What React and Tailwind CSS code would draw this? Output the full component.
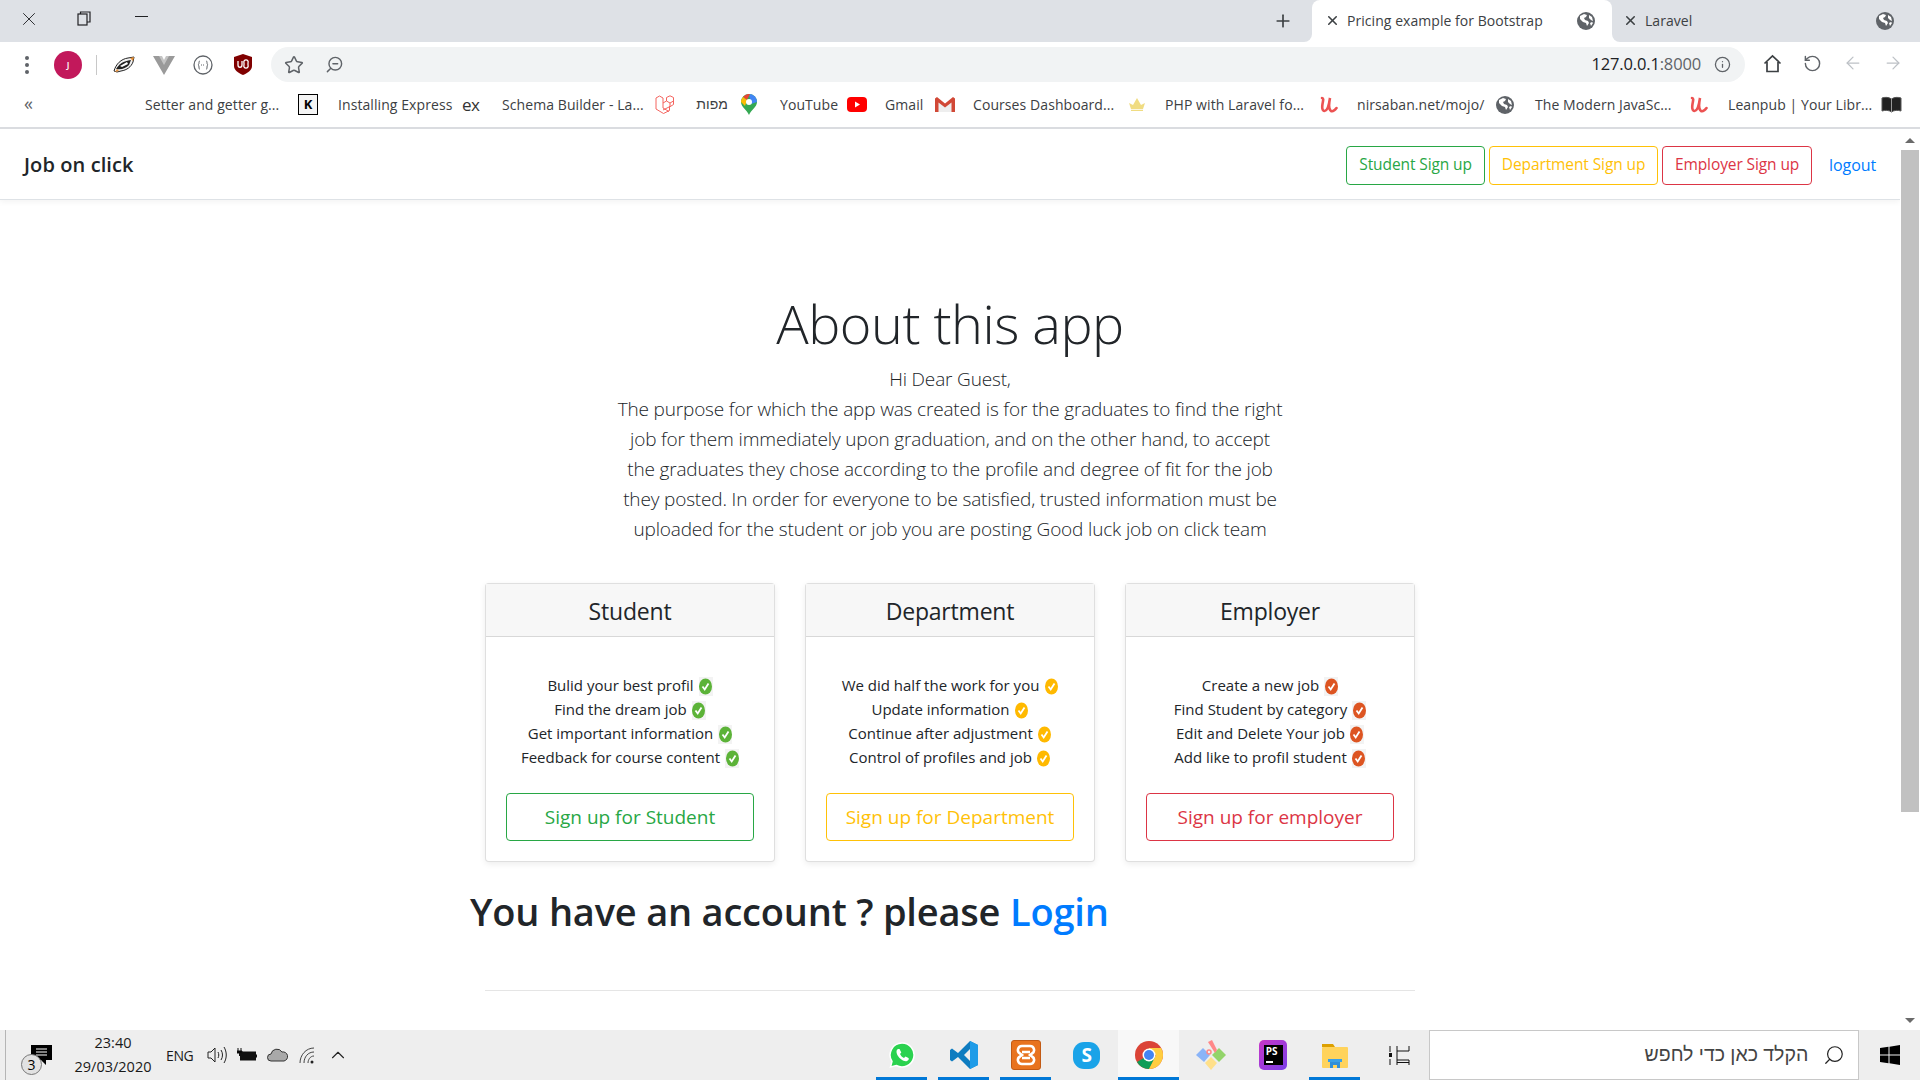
import React from "react";
import { ArrowLeft, ArrowRight, Star, RotateCcw, ZoomOut, X, Plus, Info, Search, ChevronUp } from "lucide-react";

const Globe = ({ s = 18 }) => (
  <svg width={s} height={s} viewBox="0 0 18 18">
    <circle cx="9" cy="9" r="9" fill="#5f6368" />
    <path d="M3 4l4-2 3 1-1 2-2 1 1 2 3 1 1 2-2 3-1-3-3-1-3-3zM12 3l3 2 1 4-2-1-2-2zM13 11l2-1 1 1-2 3z" fill="#fff" />
  </svg>
);
const UdemyU = () => (
  <svg width="19" height="17" viewBox="0 0 19 17">
    <path d="M3 2c2 0 1 3 .5 6S3 15 5.500 15c3 0 4.500-6 5.500-13-1 5-2 11 1 13 2 1 4-1 5.500-3" fill="none" stroke="#ec5252" strokeWidth="2.600" strokeLinecap="round" />
  </svg>
);
const Bookmark = ({ w, text, icon, gap = "gap-3", rtl, extra = "" }) => (
  <div className={`flex items-center ${gap} ${extra}`}>
    <span className={`block whitespace-nowrap ${rtl ? "font-['Liberation_Sans',sans-serif] text-right" : ""}`} style={{ width: w }}>{text}</span>
    {icon}
  </div>
);
const Check = ({ color, bg }) => (
  <span className={`inline-flex items-center justify-center w-[14px] h-[19px] ml-[5px] align-[-4px] ${bg}`}>
    <svg width="13" height="17" viewBox="0 0 13 17">
      <ellipse cx="6.500" cy="8.500" rx="6.500" ry="8" fill={color} />
      <path d="M3.500 8.500l2.200 3 3.800-6" fill="none" stroke="#fff" strokeWidth="1.800" />
    </svg>
  </span>
);
const Card = ({ title, items, btn, text, border, color, bg }) => (
  <div className="w-[290px] h-[279px] border border-[rgba(0,0,0,0.125)] rounded-[4px] shadow-[0_2px_6px_rgba(0,0,0,0.075)] bg-white flex flex-col">
    <div className="h-[53px] pt-[2px] bg-[#f7f7f7] border-b border-[rgba(0,0,0,0.125)] flex items-center justify-center text-[23px] text-[#212529] tracking-[-0.2px]">{title}</div>
    <div className="px-[20px] pt-[36px]">
      <ul className="text-center text-[15px] leading-[24px] text-[#212529] tracking-[0px]">
        {items.map((t) => (
          <li key={t}>{t}<Check color={color} bg={bg} /></li>
        ))}
      </ul>
      <div className={`mt-[24px] h-[48px] border rounded-[4px] flex items-center justify-center text-[19px] ${text} ${border}`}>{btn}</div>
    </div>
  </div>
);
const Pill = ({ c, children }) => (
  <div className={`h-[39px] border rounded-[4px] flex items-center justify-center text-[15.500px] tracking-[-0.1px] ${c}`}>{children}</div>
);
const TaskIcon = ({ on, active, children }) => (
  <div className={`relative h-full flex items-center justify-center ${active ? "bg-[#f8f8f8] w-[61px]" : "w-[51px]"}`}>
    {children}
    {on && <div className="absolute bottom-0 left-0 right-0 h-[3px] bg-[#0078d7]" />}
  </div>
);

export default function App() {
  return (
    <div className="w-[1920px] h-[1080px] overflow-hidden flex flex-col bg-white text-[#3c4043] font-['Open_Sans','Noto_Sans',sans-serif]">
      {/* tab strip */}
      <div className="h-[42px] shrink-0 flex bg-[linear-gradient(#dee1e6_50%,#fff_50%)]">
        <div className="w-[1312px] bg-[#dee1e6] rounded-br-[8px] flex items-center relative">
          <X size={22} strokeWidth={1} className="ml-[18px] mb-[5px] text-[#202124]" />
          <svg width="14" height="15" viewBox="0 0 14 15" className="ml-[37px] mb-[5px]" fill="none" stroke="#202124" strokeWidth="1.200"><rect x="1" y="3" width="9" height="11" /><path d="M3.500 3V1H13v10h-3" /></svg>
          <div className="ml-[44px] mb-[9px] w-[13px] h-[1px] bg-[#202124]" />
          <Plus size={20} strokeWidth={2} className="absolute left-[1273px] top-[11px] text-[#3c4043]" />
        </div>
        <div className="w-[300px] bg-white rounded-t-[8px] flex items-center pl-[13px] pr-[17px] pb-[1px] text-[14px] tracking-[0.05px]">
          <X size={15} strokeWidth={2.500} className="text-[#3c4043]" />
          <span className="ml-[7px] flex-1">Pricing example for Bootstrap</span>
          <Globe />
        </div>
        <div className="flex-1 bg-[#dee1e6] rounded-bl-[8px] flex items-center pl-[11px] pr-[26px] pb-[1px] text-[14px] tracking-[0.05px]">
          <X size={15} strokeWidth={2.500} className="text-[#3c4043]" />
          <span className="ml-[7px] flex-1">Laravel</span>
          <Globe />
        </div>
      </div>
      {/* toolbar */}
      <div className="h-[40px] shrink-0 pt-[5px] flex items-stretch bg-white relative">
        <div className="w-[271px] shrink-0 flex items-center">
          <div className="ml-[25px] flex flex-col gap-[3px]">
            <span className="w-[4px] h-[4px] rounded-full bg-[#5f6368]" />
            <span className="w-[4px] h-[4px] rounded-full bg-[#5f6368]" />
            <span className="w-[4px] h-[4px] rounded-full bg-[#5f6368]" />
          </div>
          <div className="ml-[25px] w-[28px] h-[28px] rounded-full bg-[#c2185b] text-white text-[9px] font-semibold flex items-center justify-center">J</div>
          <div className="ml-[14px] w-[1px] h-[20px] bg-[#c8c8c8]" />
          <svg width="22" height="18" viewBox="0 0 22 18" className="ml-[16px]">
            <path d="M1 15C3 8 8 3 15 2l6-1-1 5c-2 5-6 8-12 9l-4 1z" fill="#f2f2f2" stroke="#222" />
            <path d="M3 13c3-5 7-8 15-9l-2 5c-3 3-7 5-13 4z" fill="#222" />
            <path d="M7 10l7-4 1 2-6 3z" fill="#fff" />
            <path d="M17 2l4-1-1 4zM2 16l2-3 2 2z" fill="#e8923a" />
          </svg>
          <svg width="22" height="20" viewBox="0 0 22 20" className="ml-[18px]">
            <path d="M0 1h7l4 7 4-7h7L11 20z" fill="#9a9a9a" />
            <path d="M6 1h3l2 4 2-4h3l-5 9z" fill="#c4c4c4" />
          </svg>
          <svg width="20" height="20" viewBox="0 0 20 20" className="ml-[18px]">
            <circle cx="10" cy="10" r="9" fill="none" stroke="#5f6368" strokeWidth="1.300" />
            <path d="M7 6c-1 0-1 1-1 2s-1 2-1 2 1 0 1 2 0 2 1 2M13 6c1 0 1 1 1 2s1 2 1 2-1 0-1 2 0 2-1 2" fill="none" stroke="#5f6368" />
            <path d="M8 10h4" stroke="#5f6368" strokeDasharray="1 1" />
          </svg>
          <svg width="18" height="21" viewBox="0 0 18 21" className="ml-[21px]">
            <path d="M9 0l9 3v9c0 4-4 7-9 9-5-2-9-5-9-9V3z" fill="#800000" />
            <path d="M4 7v4c0 3 4 3 4 0V7M10 11a2.200 2.200 0 1 0 4 0V9a2.200 2.200 0 1 0-4 0z" fill="none" stroke="#fff" strokeWidth="1.300" />
          </svg>
        </div>
        <div className="w-[1474px] h-[35px] shrink-0 rounded-full bg-[#f1f3f4] flex items-center pl-[13px] pr-[14px]">
          <Star size={20} strokeWidth={1.800} className="text-[#5f6368]" />
          <ZoomOut size={19} strokeWidth={1.800} className="ml-[21px] text-[#5f6368] -scale-x-100" />
          <span className="ml-auto text-[16.500px] text-[#202124] tracking-[-0.15px]">127.0.0.1<span className="text-[#5f6368]">:8000</span></span>
          <Info size={17} strokeWidth={1.800} className="ml-[13px] text-[#5f6368]" />
        </div>
        <div className="flex-1 flex items-center pl-[18px] mb-[3px]">
          <svg width="19" height="19" viewBox="0 0 19 19" fill="none" stroke="#3c4043" strokeWidth="1.700"><path d="M1.500 9.500L9.500 2l8 7.500M4 8v9.500h11V8" /></svg>
          <RotateCcw size={19} strokeWidth={1.800} className="ml-[21px] text-[#5f6368]" />
          <ArrowLeft size={20} strokeWidth={1.500} className="ml-[21px] text-[#bdc1c6]" />
          <ArrowRight size={20} strokeWidth={1.500} className="ml-[20px] text-[#bdc1c6]" />
        </div>
      </div>
      {/* bookmarks */}
      <div className="h-[47px] shrink-0 flex items-center border-b-2 border-[#dadce0] text-[14px] text-[#3c4043] tracking-[0.08px]">
        <span className="ml-[24px] w-[121px] text-[#5f6368] text-[18px] -mt-[3px]">«</span>
        <div className="flex items-center gap-[18px]">
          <Bookmark w={136} extra="mr-[2px]" text="Setter and getter g..." icon={<div className="w-[20px] h-[21px] border border-black bg-[#f4f4f4] flex items-center justify-center font-bold text-[13px] text-black">K</div>} gap="gap-[17px]" />
          <Bookmark w={114} extra="mr-[3px]" text="Installing Express" icon={<span className="text-[17px] text-[#333] w-[19px] tracking-[-0.5px]">ex</span>} gap="gap-[10px]" />
          <Bookmark w={143} text="Schema Builder - La..." gap="gap-[10px]" icon={
            <svg width="21" height="20" viewBox="0 0 21 20" fill="none" stroke="#f4645f" strokeWidth="1"><path d="M1 3l3.500-2L8 3v10l6 3.500M1 3v11l7.500 4.500 6-3V11M8 8l3.500-2M11.500 6V2.500L15 .8l3.500 1.700V6L15 8l-3.500-2zM15 8v3.500l-7 3.500M18.500 6v3.500L14.500 12" /></svg>
          } />
          <Bookmark w={34} extra="mr-[5px]" text="מפות" rtl gap="gap-[13px]" icon={
            <svg width="16" height="21" viewBox="0 0 16 21"><path d="M8 0a8 8 0 0 1 8 8c0 5-6 8-8 13-2-5-8-8-8-13a8 8 0 0 1 8-8z" fill="#34a853" /><path d="M8 0a8 8 0 0 1 8 8l-6 2z" fill="#4285f4" /><path d="M2 3a8 8 0 0 1 7-3l-3 6z" fill="#ea4335" /><path d="M0 8c0-2 1-4 2-5l4 3-2 6z" fill="#fbbc04" /><circle cx="8" cy="8" r="3" fill="#fff" /></svg>
          } />
          <Bookmark w={58} text="YouTube" gap="gap-[9px]" icon={
            <svg width="20" height="15" viewBox="0 0 20 15"><rect width="20" height="15" rx="4" fill="#f00" /><path d="M8 4.500v6l5-3z" fill="#fff" /></svg>
          } />
          <Bookmark w={40} text="Gmail" gap="gap-[10px]" icon={
            <svg width="20" height="15" viewBox="0 0 20 15"><path d="M1 1l9 7 9-7v14H1z" fill="#eee" /><path d="M0 1.500L2 0l8 6.500L18 0l2 1.500V15h-3.500V5.500L10 10.500 3.500 5.500V15H0z" fill="#d14836" /></svg>
          } />
          <Bookmark w={140} text="Courses Dashboard..." gap="gap-[14px]" icon={
            <svg width="20" height="13" viewBox="0 0 20 13" fill="#f0dc82"><path d="M2 5l4 2 4-7 4 7 4-2-2 6H4zM4 11.800h12V13H4z" /></svg>
          } />
          <Bookmark w={139} extra="mr-[1px]" text="PHP with Laravel fo..." gap="gap-[15px]" icon={<UdemyU />} />
          <Bookmark w={127} extra="mr-[3px]" text="nirsaban.net/mojo/" gap="gap-[12px]" icon={<Globe />} />
          <Bookmark w={139} extra="mr-[2px]" text="The Modern JavaSc..." gap="gap-[15px]" icon={<UdemyU />} />
          <Bookmark w={139} text="Leanpub | Your Libr..." gap="gap-[14px]" icon={
            <svg width="21" height="17" viewBox="0 0 21 17"><path d="M1 2c3-1 7-1 9.500 1C13 1 17 1 20 2v13c-3-1-7-1-9.500 1C8 14 4 14 1 15z" fill="#222" stroke="#555" /><path d="M10.500 3v13" stroke="#999" /></svg>
          } />
        </div>
      </div>
      {/* page */}
      <div className="flex-1 min-h-0 flex overflow-hidden">
        <div className="flex-1 min-w-0 overflow-hidden text-[#212529]">
          <nav className="h-[71px] pt-[2px] border-b border-[#dee2e6] shadow-[0_2px_6px_rgba(0,0,0,0.05)] flex items-center pl-[24px] pr-[24px]">
            <span className="text-[20px] font-semibold tracking-[0.1px] text-[#212529]">Job on click</span>
            <div className="ml-auto flex items-center gap-[4px]">
              <Pill c="w-[139px] ml-[1px] text-[#28a745] border-[#28a745]">Student Sign up</Pill>
              <Pill c="w-[169px] text-[#ffc107] border-[#ffc107]">Department Sign up</Pill>
              <Pill c="w-[150px] text-[#dc3545] border-[#dc3545]">Employer Sign up</Pill>
              <a className="ml-[13px] text-[16px] tracking-[-0.1px] text-[#007bff]">logout</a>
            </div>
          </nav>
          <div className="w-[960px] mx-auto pt-[90px]">
            <h1 className="text-[54px] leading-[67px] font-light text-center text-[#212529] tracking-[-0.5px]">About this app</h1>
            <p className="w-[700px] mx-auto mt-[7px] text-center text-[19px] leading-[30px] font-light text-[#212529] tracking-[-0.16px]">
              Hi Dear Guest,<br />
              The purpose for which the app was created is for the graduates to find the right<br />
              job for them immediately upon graduation, and on the other hand, to accept<br />
              the graduates they chose according to the profile and degree of fit for the job<br />
              they posted. In order for everyone to be satisfied, trusted information must be<br />
              uploaded for the student or job you are posting Good luck job on click team
            </p>
            <div className="mt-[39px] flex justify-center gap-[30px]">
              <Card title="Student" btn="Sign up for Student" color="#5cb338" bg="bg-[#f3f3f3]" text="text-[#28a745]" border="border-[#28a745]"
                items={["Bulid your best profil", "Find the dream job", "Get important information", "Feedback for course content"]} />
              <Card title="Department" btn="Sign up for Department" color="#ffb900" bg="bg-white" text="text-[#ffc107]" border="border-[#ffc107]"
                items={["We did half the work for you", "Update information", "Continue after adjustment", "Control of profiles and job"]} />
              <Card title="Employer" btn="Sign up for employer" color="#dd5522" bg="bg-[#f3f3f3]" text="text-[#dc3545]" border="border-[#dc3545]"
                items={["Create a new job", "Find Student by category", "Edit and Delete Your job", "Add like to profil student"]} />
            </div>
            <h2 className="mt-[25px] text-[38px] leading-[48px] font-semibold text-[#212529] tracking-[-0.2px] whitespace-nowrap">You have an account ? please <a className="text-[#007bff]">Login</a></h2>
            <hr className="mt-[55px] mx-[15px] border-[rgba(0,0,0,0.1)]" />
          </div>
        </div>
        <div className="w-[20px] shrink-0 bg-white flex flex-col items-center">
          <div className="mt-[9px] w-0 h-0 border-x-[5px] border-x-transparent border-b-[5px] border-b-[#6a6a6a]" />
          <div className="mt-[7px] w-[18px] h-[662px] bg-[#c1c1c1]" />
          <div className="mt-auto mb-[7px] w-0 h-0 border-x-[5px] border-x-transparent border-t-[5px] border-t-[#6a6a6a]" />
        </div>
      </div>
      {/* taskbar */}
      <div className="h-[50px] shrink-0 bg-[#eeeeee] flex items-stretch text-[#1a1a1a] text-[14px]">
        <div className="ml-[5px] w-[1px] bg-[#b5b5b5]" />
        <div className="relative w-[70px]">
          <svg width="21" height="20" viewBox="0 0 21 20" className="absolute left-[25px] top-[15px]"><path d="M0 0h21v15h-6v5l-5-5H0z" fill="#000" /><path d="M5 4h11M5 7h11M5 10h11" stroke="#fff" /></svg>
          <div className="absolute left-[15px] top-[24px] w-[21px] h-[21px] rounded-full bg-[#e2e2e2] border border-[#777] flex items-center justify-center text-[14px] text-black">3</div>
        </div>
        <div className="w-[74px] flex flex-col items-center justify-center text-[14.500px] leading-[24px]">
          <span>23:40</span>
          <span>29/03/2020</span>
        </div>
        <span className="ml-[16px] flex items-center text-[14px] tracking-[-0.4px]">ENG</span>
        <svg width="20" height="18" viewBox="0 0 20 18" className="ml-[14px] self-center" fill="none" stroke="#222"><path d="M1 6h3l4-4v14l-4-4H1zM11 6c1 2 1 4 0 6M14 4c2 3 2 7 0 10M17 1c3 5 3 11 0 16" /></svg>
        <svg width="20" height="14" viewBox="0 0 20 14" className="ml-[10px] self-center"><rect x="3.500" y="4" width="15" height="8" fill="#111" stroke="#111" /><rect x="18.500" y="6.500" width="1.500" height="3" fill="#111" /><path d="M1 0v3M4 0v3M0 3h5v2H0zM2.500 5v3" stroke="#111" /></svg>
        <svg width="21" height="14" viewBox="0 0 21 14" className="ml-[10px] self-center"><path d="M4 13a3.500 3.500 0 0 1 0-7 6 6 0 0 1 11-2 4.500 4.500 0 0 1 2 9z" fill="#a9a9a9" stroke="#333" /></svg>
        <svg width="17" height="17" viewBox="0 0 17 17" className="ml-[11px] self-center" fill="none" stroke="#444"><path d="M1 16C1 8 7 1 15 1M5 16c0-6 4-11 10-11M9 16c0-3 2-7 6-7" /><circle cx="13" cy="15" r="1.500" fill="#222" stroke="none" /></svg>
        <ChevronUp size={22} strokeWidth={1.200} className="ml-[11px] self-center text-[#222]" />
        <div className="ml-[527px] flex items-stretch">
          <TaskIcon on>
            <svg width="26" height="26" viewBox="0 0 26 26"><path d="M13 1a12 12 0 0 0-10 18.500L1.500 25l5.700-1.500A12 12 0 1 0 13 1z" fill="#2bd24f" stroke="#fff" strokeWidth="1.500" /><path d="M9 7c-2 1-2 4 0 7s6 6 9 5c2-1 2-2 1.500-3l-3-1.500-1.500 1.500c-2-1-3-2-4-4l1.300-1.500L10.500 7z" fill="#fff" /></svg>
          </TaskIcon>
          <div className="w-[11px]" />
          <TaskIcon on>
            <svg width="30" height="30" viewBox="0 0 30 30"><path d="M21 1l8 4v20l-8 4L9 17l-6 4.500-2-1.500v-10l2-1.500 6 4.500z" fill="#0e7cc0" /><path d="M21 1l8 4v20l-8 4z" fill="#1f9ce8" /><path d="M21 9l-6 6 6 6z" fill="#eeeeee" /></svg>
          </TaskIcon>
          <div className="w-[11px]" />
          <TaskIcon on>
            <div className="w-[30px] h-[30px] rounded-[3px] bg-[#e8731e] border border-[#c25a14] flex items-center justify-center">
              <svg width="24" height="22" viewBox="0 0 24 22" fill="none" stroke="#fff" strokeWidth="2.600"><path d="M8 2a4 4 0 0 0-2 7.500L8 11l-2 1.500A4 4 0 0 0 8 20h8a4 4 0 0 0 2-7.500L16 11l2-1.500A4 4 0 0 0 16 2zM8 8h8M8 14h8" /></svg>
            </div>
          </TaskIcon>
          <div className="w-[10px]" />
          <TaskIcon>
            <div className="w-[27px] h-[27px] rounded-[11px] bg-[#1aa3e8] flex items-center justify-center text-white font-bold text-[19px]">S</div>
          </TaskIcon>
          <div className="w-[6px]" />
          <TaskIcon on active>
            <svg width="28" height="28" viewBox="0 0 28 28"><circle cx="14" cy="14" r="14" fill="#db4437" /><path d="M14 14L2 21a14 14 0 0 0 12 7l7-12z" fill="#0f9d58" /><path d="M14 14l7 0-7 14a14 14 0 0 0 14-14c0-2-.5-5-2-7H14z" fill="#ffcd40" /><circle cx="14" cy="14" r="6.500" fill="#fff" /><circle cx="14" cy="14" r="5" fill="#4285f4" /></svg>
          </TaskIcon>
          <div className="w-[6px]" />
          <TaskIcon>
            <svg width="32" height="32" viewBox="0 0 32 32"><path d="M8 9l7 7-6 7-8-7z" fill="#8ab4f8" /><path d="M24 9l7 7-7 7-7-7z" fill="#93d46a" /><path d="M16 18l6 6-6 7-6-7z" fill="#ffe08a" /><path d="M13 3l4-2 5 10-2 3z" fill="#f88" /><circle cx="14" cy="13" r="2" fill="none" stroke="#f88" strokeWidth="1.500" /></svg>
          </TaskIcon>
          <div className="w-[11px]" />
          <TaskIcon>
            <div className="relative w-[28px] h-[30px]">
              <div className="absolute inset-0 rounded-[5px] bg-[linear-gradient(135deg,#c837c8,#7b3fe8)]" />
              <div className="absolute left-[5px] top-[5px] w-[19px] h-[20px] bg-black text-white text-[10px] font-bold leading-[13px] pl-[2px]">PS</div>
              <div className="absolute left-[7px] top-[21px] w-[7px] h-[1.500px] bg-white" />
            </div>
          </TaskIcon>
          <div className="w-[11px]" />
          <TaskIcon on>
            <svg width="28" height="26" viewBox="0 0 28 26"><path d="M1 2h11l2 3H1z" fill="#dda000" /><rect x="1" y="5" width="26" height="21" rx="1" fill="#ffd35c" /><path d="M9 26v-6h10v6h-3v-3h-4v3z" fill="#2f8fd9" /><rect x="7" y="17" width="14" height="3" fill="#3aa0e8" /></svg>
          </TaskIcon>
          <div className="w-[14px]" />
          <div className="w-[51px] flex items-center justify-center">
            <svg width="21" height="19" viewBox="0 0 21 19" fill="none" stroke="#111"><path d="M1 0v6M1 13v6M8 0v5h12M8 14v5M20 14H8V5M8 16.500h12M20 14v5M20 0v5" /><rect x="0" y="7" width="3" height="4" fill="#111" stroke="none" /></svg>
          </div>
        </div>
        <div className="ml-[4px] w-[430px] border border-[#c8c8c8] bg-white flex items-center justify-end pr-[13px]">
          <span dir="rtl" className="font-['Liberation_Sans',sans-serif] text-[19.500px] text-[#444]">הקלד כאן כדי לחפש</span>
          <Search size={22} strokeWidth={1.300} className="ml-[15px] text-[#222] -scale-x-100" />
        </div>
        <div className="flex-1 flex items-center justify-center">
          <svg width="20" height="20" viewBox="0 0 20 20" fill="#000"><path d="M0 3l8.500-1.200V9.500H0zM9.500 1.700L20 0v9.500H9.500zM0 10.500h8.500v7.700L0 17zM9.500 10.500H20V20L9.500 18.300z" /></svg>
        </div>
      </div>
    </div>
  );
}
